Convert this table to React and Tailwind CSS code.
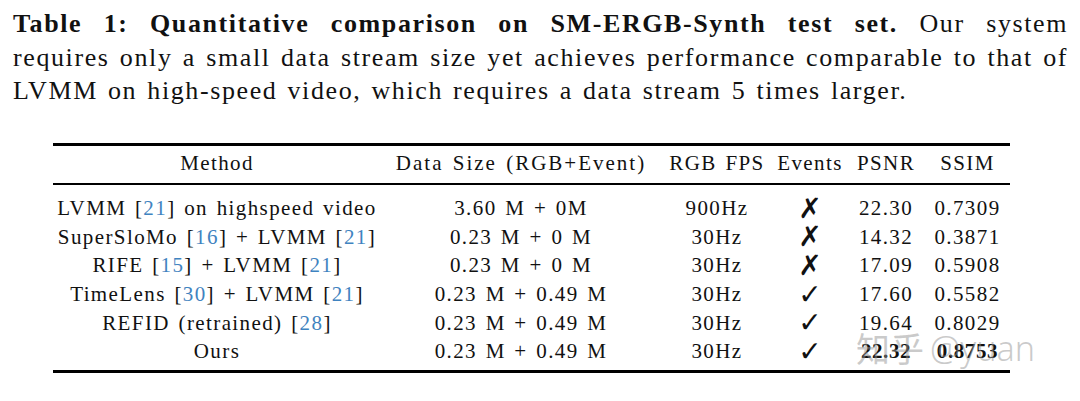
const rows = [
  { method: ["LVMM ", ["21"], " on highspeed video"], size: "3.60 M + 0M", fps: "900Hz", ev: false, psnr: "22.30", ssim: "0.7309" },
  { method: ["SuperSloMo ", ["16"], " + LVMM ", ["21"]], size: "0.23 M + 0 M", fps: "30Hz", ev: false, psnr: "14.32", ssim: "0.3871" },
  { method: ["RIFE ", ["15"], " + LVMM ", ["21"]], size: "0.23 M + 0 M", fps: "30Hz", ev: false, psnr: "17.09", ssim: "0.5908" },
  { method: ["TimeLens ", ["30"], " + LVMM ", ["21"]], size: "0.23 M + 0.49 M", fps: "30Hz", ev: true, psnr: "17.60", ssim: "0.5582" },
  { method: ["REFID (retrained) ", ["28"]], size: "0.23 M + 0.49 M", fps: "30Hz", ev: true, psnr: "19.64", ssim: "0.8029" },
  { method: ["Ours"], size: "0.23 M + 0.49 M", fps: "30Hz", ev: true, psnr: "22.32", ssim: "0.8753", best: true },
];

// citation parts are wrapped in arrays -> blue number inside black brackets
function Method({ parts }) {
  return (
    <>
      {parts.map((p, i) =>
        Array.isArray(p) ? (
          <span key={i}>
            [<span className="text-[#3f83c0]">{p[0]}</span>]
          </span>
        ) : (
          <span key={i}>{p}</span>
        )
      )}
    </>
  );
}

function Mark({ ok }) {
  return (
    <span className="font-['DejaVu_Sans',sans-serif] text-[28px] tracking-normal">
      {ok ? "\u2713" : "\u2717"}
    </span>
  );
}

const cols = "grid grid-cols-[328px_280px_112px_74px_78px_85px] text-center";

export default function App() {
  return (
    <div className="relative w-[1080px] h-[401px] overflow-hidden bg-white text-[#111] font-['Liberation_Serif',serif]">
      <div className="pl-[13px] pr-[12px] pt-[7px] text-[26px] leading-[33.5px] tracking-[1.6px] [word-spacing:2px]">
        <div className="text-justify [text-align-last:justify]">
          <b>Table 1: Quantitative comparison on SM-ERGB-Synth test set.</b> Our system
        </div>
        <div className="text-justify [text-align-last:justify]">
          requires only a small data stream size yet achieves performance comparable to that of
        </div>
        <div>LVMM on high-speed video, which requires a data stream 5 times larger.</div>
      </div>

      <div className="ml-[53px] mt-[35px] w-[957px] text-[21px] tracking-[1.4px] [word-spacing:2px]">
        <div className="h-[3px] bg-black" />
        <div className={cols + " h-[37px] items-center"}>
          <div>Method</div>
          <div className="whitespace-nowrap tracking-[2px]">Data Size (RGB+Event)</div>
          <div className="whitespace-nowrap">RGB FPS</div>
          <div>Events</div>
          <div>PSNR</div>
          <div>SSIM</div>
        </div>
        <div className="h-[2px] bg-black" />
        <div className="pt-[10px] pb-[4px]">
          {rows.map((r, i) => (
            <div key={i} className={cols + " h-[28.6px] items-center leading-none"}>
              <div className="whitespace-nowrap">
                <Method parts={r.method} />
              </div>
              <div className="whitespace-pre">{r.size}</div>
              <div>{r.fps}</div>
              <div>
                <Mark ok={r.ev} />
              </div>
              <div className={r.best ? "font-bold tracking-[0.6px]" : ""}>{r.psnr}</div>
              <div className={r.best ? "font-bold tracking-[0.6px]" : ""}>{r.ssim}</div>
            </div>
          ))}
        </div>
        <div className="h-[3px] bg-black" />
      </div>

      <div className="absolute left-[856px] top-[331px] flex items-center gap-[6px] text-[rgba(150,150,150,0.5)] pointer-events-none">
        <span className="font-['Noto_Sans_CJK_SC',sans-serif] text-[34px] leading-none">知乎</span>
        <span className="font-['Noto_Sans',sans-serif] font-light text-[34px] leading-none">@yuan</span>
      </div>
    </div>
  );
}
